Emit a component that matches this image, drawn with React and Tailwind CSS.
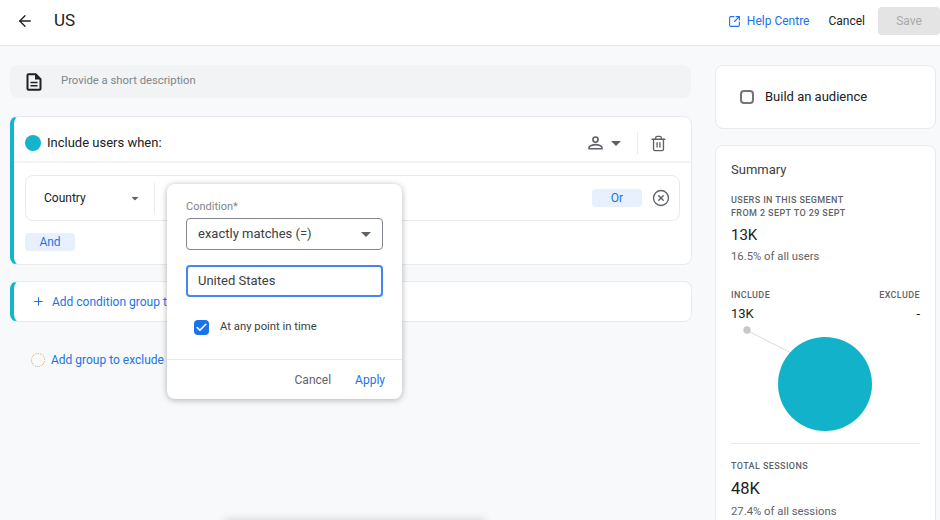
import { ArrowLeft, SquareArrowOutUpRight, Plus, Trash2, CircleX, Check } from 'lucide-react';

function Caret({ className = '' }) {
  return (
    <svg width="10" height="5" viewBox="0 0 10 5" className={className}>
      <path d="M0 0h10L5 5z" fill="currentColor" />
    </svg>
  );
}

function DocIcon() {
  return (
    <svg width="16" height="18" viewBox="0 0 16 18" fill="none" stroke="#202124" strokeWidth="2">
      <path d="M1.500 2.300c0-.5.4-1 1-1h7.200l4.800 4.800v9.600c0 .6-.5 1-1 1h-11c-.6 0-1-.4-1-1z" />
      <path d="M4.500 9.500h7M4.500 12.700h7" strokeWidth="1.600" />
      <path d="M9 1.500v5h5.500z" fill="#202124" stroke="none" />
    </svg>
  );
}

function PersonIcon() {
  return (
    <svg width="15" height="14" viewBox="0 0 15 14" fill="none" stroke="#5f6368" strokeWidth="1.600">
      <circle cx="7.500" cy="3.600" r="2.600" />
      <path d="M1 12.800v-1.200c0-1.900 3.600-3 6.500-3s6.500 1.100 6.500 3v1.200z" />
    </svg>
  );
}

function Popover() {
  return (
    <div className="absolute left-[167px] top-[184px] w-[235px] h-[215px] bg-white rounded-lg shadow-[0_1px_6px_rgba(60,64,67,0.4)] flex flex-col">
      <div className="px-[19px] pt-[16px] flex-1">
        <div className="text-[11px] leading-[13px] text-[#80868b]">Condition*</div>
        <div className="mt-[5px] h-[32px] w-[197px] border border-[#80868b] rounded flex items-center justify-between pl-[11px] pr-[11px] text-[13px] text-[#3c4043]">
          <span>exactly matches (=)</span>
          <Caret className="text-[#5f6368]" />
        </div>
        <div className="mt-[15px] h-[32px] w-[197px] border-2 border-[#4285f4] rounded flex items-center pl-[10px] text-[13px] text-[#3c4043]">
          United States
        </div>
        <div className="mt-[22px] ml-2 flex items-center gap-[11px] text-[11.3px] text-[#3c4043]">
          <span className="w-[15px] h-[15px] bg-[#1a73e8] rounded-sm flex items-center justify-center">
            <Check size={13} strokeWidth={3} className="text-white" />
          </span>
          At any point in time
        </div>
      </div>
      <div className="h-[40px] border-t border-[#e8eaed] flex items-center justify-end gap-6 pr-[17px] text-xs font-[450]">
        <span className="text-[#5f6368]">Cancel</span>
        <span className="text-[#1a73e8]">Apply</span>
      </div>
    </div>
  );
}

export default function App() {
  return (
    <div className="relative w-[940px] h-[520px] overflow-hidden bg-[#f8f9fa] font-['Roboto',sans-serif]">
      <header className="h-[46px] bg-white border-b border-[#e3e5e8] flex items-center pb-[3px]">
        <ArrowLeft size={18} strokeWidth={1.8} className="ml-4 text-[#202124]" />
        <span className="ml-[20px] text-[17px] text-[#202124]">US</span>
        <div className="ml-auto flex items-center">
          <SquareArrowOutUpRight size={13} strokeWidth={2} className="text-[#1a73e8]" />
          <span className="ml-[6px] text-xs font-[450] text-[#1a73e8]">Help Centre</span>
          <span className="ml-[19px] text-xs font-[450] text-[#202124]">Cancel</span>
          <span className="ml-[13px] w-[62px] h-[28px] bg-[#e4e4e4] rounded-sm flex items-center justify-center text-xs font-[450] text-[#a8a8a8]">Save</span>
        </div>
      </header>

      <div className="flex pt-[19px] pl-[10px]">
        <div className="w-[682px]">
          <div className="h-[33px] w-[681px] bg-[#f1f3f4] rounded-lg flex items-center pl-[16px] text-[11.3px] text-[#80868b]">
            <DocIcon />
            <span className="ml-[19px]">Provide a short description</span>
          </div>

          <div className="mt-[18px] h-[149px] bg-white rounded-lg border border-[#e8eaed] border-l-4 border-l-[#12b5cb]">
            <div className="h-[46px] border-b-2 border-[#f1f3f4] flex items-center pl-[11px] pt-[8px]">
              <span className="w-4 h-4 rounded-full bg-[#12b5cb]" />
              <span className="ml-[6px] text-[13px] font-[450] text-[#202124]">Include users when:</span>
              <div className="ml-auto flex items-center">
                <PersonIcon />
                <Caret className="ml-2 text-[#5f6368]" />
                <span className="ml-[16px] w-px h-[22px] bg-[#e8eaed]" />
                <Trash2 size={17} strokeWidth={1.9} className="ml-[12px] mr-[24px] text-[#5f6368]" />
              </div>
            </div>
            <div className="mt-[12px] ml-[11px] mr-[11px] h-[46px] rounded-lg border border-[#e8eaed] flex items-center pl-[18px] pr-[9px]">
              <span className="w-[86px] text-xs font-[450] text-[#202124]">Country</span>
              <Caret className="text-[#5f6368] scale-75" />
              <span className="ml-[14px] w-px h-[30px] bg-[#e8eaed]" />
              <span className="ml-auto w-[50px] h-[18px] bg-[#e8f0fe] rounded-sm flex items-center justify-center text-xs text-[#1a73e8]">Or</span>
              <CircleX size={18} strokeWidth={1.8} className="ml-[10px] text-[#5f6368]" />
            </div>
            <span className="mt-[12px] ml-[11px] w-[50px] h-[18px] bg-[#e8f0fe] rounded-sm flex items-center justify-center text-xs font-[450] text-[#1a73e8]">And</span>
          </div>

          <div className="mt-[16px] h-[41px] bg-white rounded-lg border border-[#e8eaed] border-l-4 border-l-[#12b5cb] flex items-center pl-[18px]">
            <Plus size={13} strokeWidth={2} className="text-[#1a73e8]" />
            <span className="ml-[7px] text-xs font-[450] text-[#1a73e8]">Add condition group to include</span>
          </div>

          <div className="mt-[30px] ml-[21px] flex items-center">
            <span className="w-[14px] h-[14px] rounded-full border border-dotted border-[#f29d61]" />
            <span className="ml-[6px] text-xs font-[450] text-[#1a73e8]">Add group to exclude</span>
          </div>
        </div>

        <div className="ml-[23px] w-[221px]">
          <div className="h-[64px] bg-white rounded-lg border border-[#e8eaed] flex items-center pl-[24px]">
            <span className="w-[14px] h-[14px] border-2 border-[#757575] rounded-sm" />
            <span className="ml-[11px] text-[13px] font-[450] text-[#202124]">Build an audience</span>
          </div>
          <div className="mt-[16px] h-[400px] bg-white rounded-lg border border-[#e8eaed] px-[15px] pt-[16px]">
            <div className="text-[13px] leading-4 text-[#3c4043]">Summary</div>
            <div className="mt-[16px] text-[9px] leading-[13px] font-medium tracking-[0.4px] text-[#5f6368]">
              USERS IN THIS SEGMENT<br />FROM 2 SEPT TO 29 SEPT
            </div>
            <div className="mt-[5px] text-[15px] leading-5 text-[#202124]">13K</div>
            <div className="mt-[5px] text-[11.3px] leading-[14px] text-[#5f6368]">16.5% of all users</div>
            <div className="mt-[25px] flex justify-between text-[9px] leading-3 font-medium tracking-[0.4px] text-[#5f6368]">
              <span>INCLUDE</span>
              <span>EXCLUDE</span>
            </div>
            <div className="mt-[4px] flex justify-between text-[13px] leading-[18px] text-[#202124]">
              <span>13K</span>
              <span>-</span>
            </div>
            <svg width="190" height="121" viewBox="0 0 190 121" className="block">
              <path d="M16 7.500 L70 35" stroke="#dadce0" strokeWidth="1" />
              <circle cx="16" cy="7" r="3.700" fill="#c8c8c8" />
              <circle cx="94" cy="61" r="47" fill="#12b2cb" />
            </svg>
            <div className="mt-[-1px] h-px bg-[#e8eaed]" />
            <div className="mt-[16px] text-[9px] leading-3 font-medium tracking-[0.4px] text-[#5f6368]">TOTAL SESSIONS</div>
            <div className="mt-[7px] text-[16.5px] leading-5 text-[#202124]">48K</div>
            <div className="mt-[6px] text-[11.3px] leading-[14px] text-[#5f6368]">27.4% of all sessions</div>
          </div>
        </div>
      </div>

      <Popover />
      <div className="absolute left-[225px] bottom-[-6px] w-[260px] h-[6px] shadow-[0_0_8px_rgba(60,64,67,0.25)]" />
    </div>
  );
}
